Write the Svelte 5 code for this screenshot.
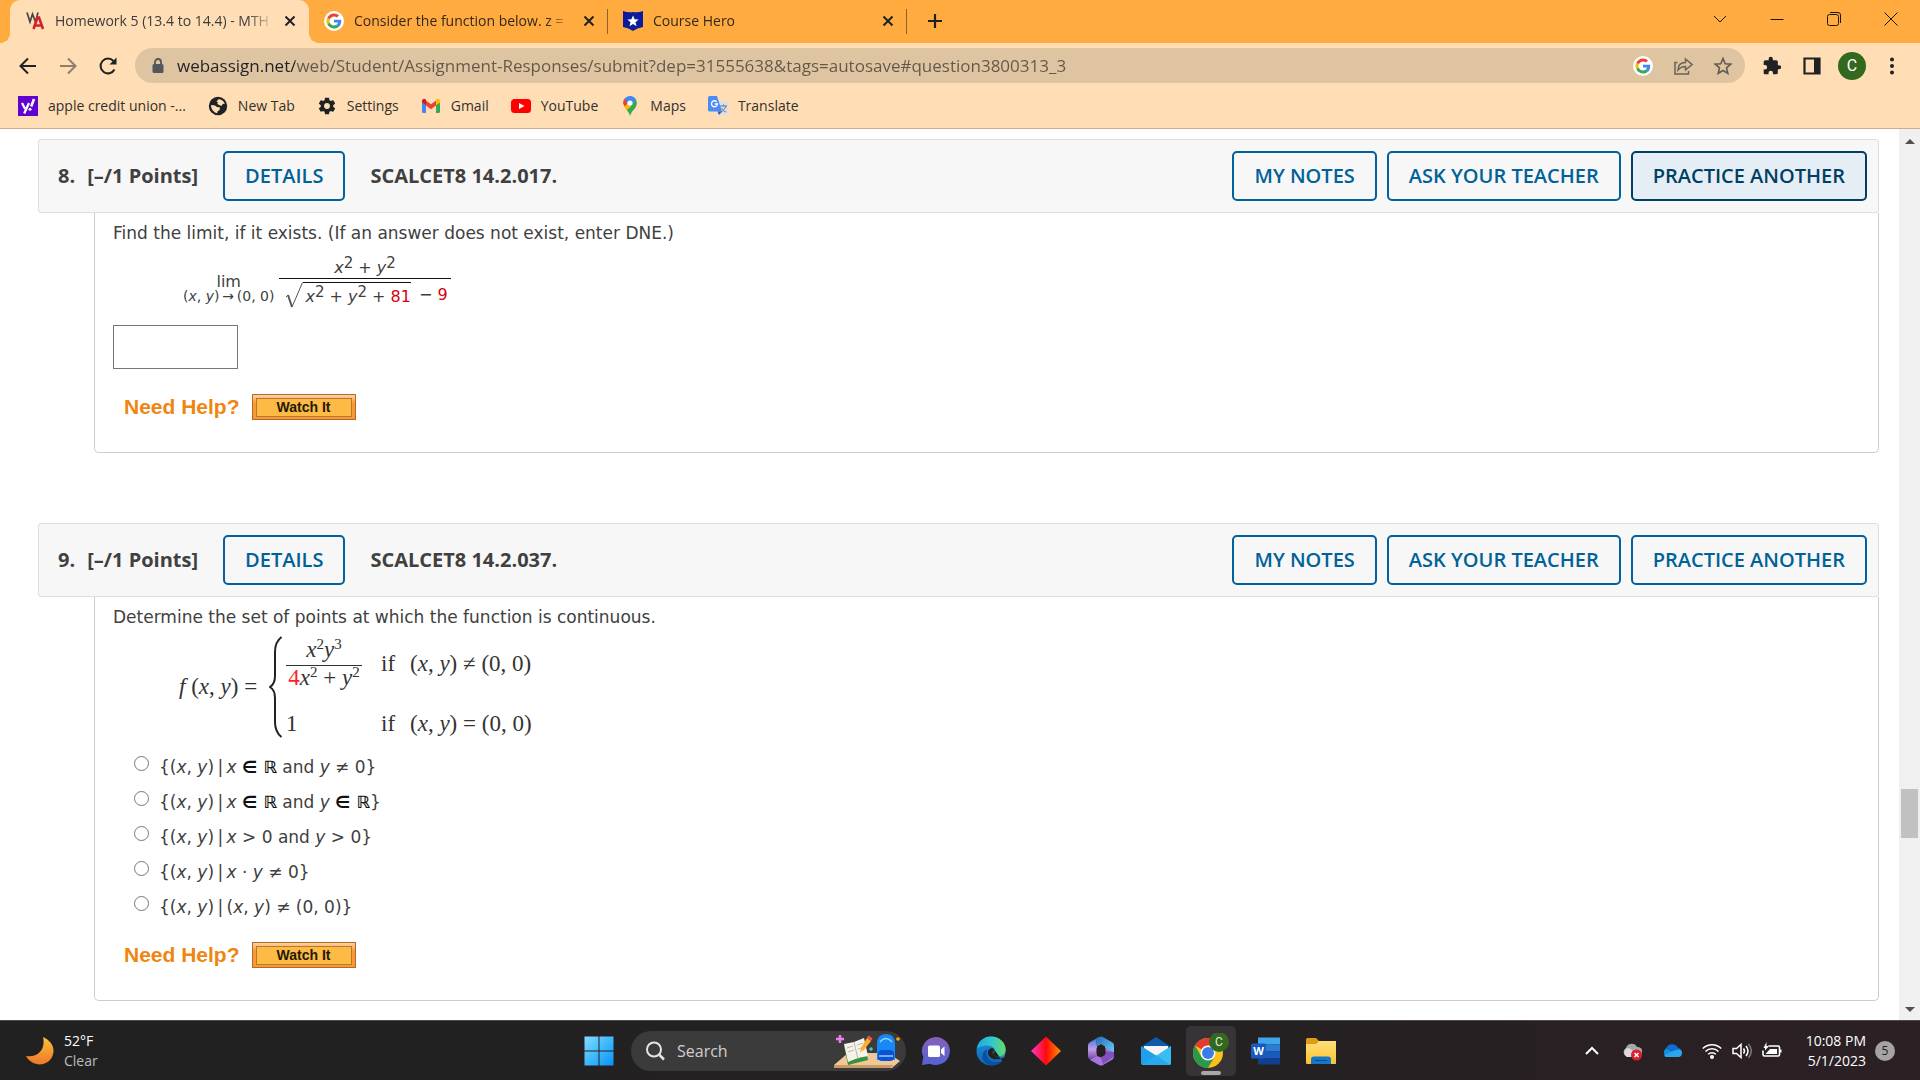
<script>
  const tabs = [
    { title: 'Homework 5 (13.4 to 14.4) - MTH', icon: 'wa', active: true },
    { title: 'Consider the function below. z =', icon: 'google', active: false },
    { title: 'Course Hero', icon: 'hero', active: false }
  ];
  const bookmarks = [
    ['yahoo', 'apple credit union -...'],
    ['globe', 'New Tab'],
    ['gear', 'Settings'],
    ['gmail', 'Gmail'],
    ['youtube', 'YouTube'],
    ['maps', 'Maps'],
    ['translate', 'Translate']
  ];
  const apps = ['chat', 'edge', 'diamond', 'm365', 'mail', 'chrome', 'word', 'folder'];
  const bar = '\u2009|\u2009';
  const arrow = '\u2009→\u2009';
  let url = $state('webassign.net/web/Student/Assignment-Responses/submit?dep=31555638&tags=autosave#question3800313_3');
  let answer = $state('');
  let choice = $state('');
</script>

{#snippet icon(name)}
  {#if name === 'wa'}
    <svg class="i20" viewBox="0 0 20 20" fill="none"><path d="M2 1.500 5 11 7.500 3l3 8L13 1.500" stroke="#444" stroke-width="1.700" /><path d="m8.500 18 4-11.500h1.500L18 18M10 14.500h7" stroke="#d5202b" stroke-width="2.600" /></svg>
  {:else if name === 'google'}
    <svg class="i20" viewBox="0 0 20 20"><circle cx="10" cy="10" r="10" fill="#fff" /><g transform="translate(2.500 2.500) scale(.3125)"><path fill="#EA4335" d="M24 9.500c3.540 0 6.710 1.220 9.210 3.600l6.850-6.850C35.900 2.380 30.470 0 24 0 14.620 0 6.510 5.380 2.560 13.220l7.980 6.190C12.430 13.720 17.740 9.500 24 9.500z" /><path fill="#4285F4" d="M46.980 24.550c0-1.570-.15-3.090-.38-4.550H24v9.020h12.940c-.58 2.960-2.260 5.480-4.780 7.180l7.730 6c4.510-4.180 7.090-10.360 7.090-17.650z" /><path fill="#FBBC05" d="M10.530 28.590c-.48-1.450-.76-2.990-.76-4.590s.27-3.140.76-4.590l-7.980-6.190C.92 16.460 0 20.120 0 24c0 3.880.92 7.540 2.560 10.780l7.970-6.190z" /><path fill="#34A853" d="M24 48c6.480 0 11.930-2.130 15.890-5.810l-7.730-6c-2.150 1.450-4.920 2.300-8.160 2.300-6.260 0-11.570-4.220-13.470-9.910l-7.980 6.190C6.510 42.620 14.620 48 24 48z" /></g></svg>
  {:else if name === 'hero'}
    <svg class="i20" viewBox="0 0 20 20"><path d="M0 0q5 2 10 1 5 1 10-1v16q-6 1-10 4-4-3-10-4z" fill="#0a1c9c" /><path d="m10 4.500 1.600 3.800 4 .3-3.100 2.600 1 4L10 13l-3.500 2.200 1-4-3.100-2.600 4-.3z" fill="#fff" /></svg>
  {:else if name === 'yahoo'}
    <svg class="i20" viewBox="0 0 20 20"><path fill="#5f01d1" d="M0 0h20v20H0z" /><path d="m4 7 3.200 6M11 7l-4.800 10.500" stroke="#fff" stroke-width="2.300" fill="none" /><path d="m16 3-2.800 7.500" stroke="#fff" stroke-width="2.600" /><circle cx="12" cy="13.200" r="1.500" fill="#fff" /></svg>
  {:else if name === 'globe'}
    <svg class="i20" viewBox="0 0 20 20"><circle cx="10" cy="10" r="9.200" fill="#202124" /><path d="M10.500 3.200c2.800 0 5.500 1.800 6.300 4.800l-2-.3-1 2-2.300-.4-2.300-1.500.8-1.600-1.500-.8zM3 9l4 .6 2 1.400 3 .5-.4 2.500-2 1.200-.5 2C5.500 16.500 3 13 3 9z" fill="#ffdeb6" /></svg>
  {:else if name === 'gear'}
    <svg class="i20" viewBox="0 0 24 24"><path fill="#202124" d="M19.430 12.980c.04-.32.07-.64.07-.98s-.03-.66-.07-.98l2.110-1.650c.19-.15.24-.42.12-.64l-2-3.460c-.12-.22-.39-.3-.61-.22l-2.490 1c-.52-.4-1.080-.73-1.690-.98l-.38-2.650A.488.488 0 0 0 14 2h-4c-.25 0-.46.18-.49.42l-.38 2.650c-.61.25-1.170.59-1.690.98l-2.490-1c-.23-.09-.49 0-.61.22l-2 3.460c-.13.22-.07.49.12.64l2.110 1.650c-.04.32-.07.65-.07.98s.03.66.07.98l-2.110 1.650c-.19.15-.24.42-.12.64l2 3.460c.12.22.39.3.61.22l2.490-1c.52.4 1.080.73 1.690.98l.38 2.650c.03.24.24.42.49.42h4c.25 0 .46-.18.49-.42l.38-2.650c.61-.25 1.170-.59 1.690-.98l2.490 1c.23.09.49 0 .61-.22l2-3.460c.12-.22.07-.49-.12-.64zM12 15.500a3.500 3.500 0 1 1 0-7 3.500 3.500 0 0 1 0 7z" /></svg>
  {:else if name === 'gmail'}
    <svg class="i20" viewBox="0 0 20 20"><path fill="#4285f4" d="M1 6v9.500q0 1.500 1.500 1.500H5V9z" /><path fill="#34a853" d="M19 6v9.500q0 1.500-1.500 1.500H15V9z" /><path fill="#ea4335" d="M5 4.500v5l5 3.800 5-3.800v-5l-5 3.800z" /><path fill="#c5221f" d="M1 5c0-2 2-3 3.500-1.800L5 3.600v5.700L1 6.400z" /><path fill="#fbbc04" d="M19 5c0-2-2-3-3.500-1.800l-.5.400v5.700l4-2.900z" /></svg>
  {:else if name === 'youtube'}
    <svg class="i20" viewBox="0 0 20 20"><rect y="3" width="20" height="14" rx="3.500" fill="#f00" /><path d="m8 7 5.500 3L8 13z" fill="#fff" /></svg>
  {:else if name === 'maps'}
    <svg class="i20" viewBox="0 0 20 20"><path fill="#34a853" d="M10 20c-1-3.500-2-4.500-4-7L16 3.500C18 8 16 11.500 13.500 14c-1.700 2-2.500 3-3.500 6z" /><path fill="#fbbc04" d="M6 13C4.700 11.300 3.500 9.500 3.200 7.500l4.500 1.300 3.500 1.200z" /><path fill="#ea4335" d="M3.200 7.500C3 5.500 3.600 4 4.700 2.600L9 6 5 11z" /><path fill="#4285f4" d="M4.700 2.600C6.500.5 9.500-.5 12.500.5c1.700.7 2.700 1.600 3.500 3L10 10 7 6.500z" /><path fill="#fbbc04" d="m4.500 11 3.500-4 3 3.500L6.800 14z" /><circle cx="10" cy="7" r="2.600" fill="#fff" /></svg>
  {:else if name === 'translate'}
    <svg class="i20" viewBox="0 0 20 20"><path fill="#dcdfe3" d="M8 5h10.500q1.500 0 1.500 1.500v11q0 1.500-1.500 1.500H11z" /><path d="M12 10h7M15.500 8.500V10M18 10c-1 3-3 5-5 6M13.500 12c1 2 2.500 3.500 4.500 4" stroke="#607988" fill="none" /><path fill="#4c8bf5" d="M1.500 0H9l5 15.500H1.500Q0 15.500 0 14V1.500Q0 0 1.500 0z" /><path fill="#3057c9" d="M9.500 15.500H14L11 19z" /><path d="M8.700 5.700a3 3 0 1 0 .8 2.300H6.800" stroke="#fff" stroke-width="1.300" fill="none" /></svg>
  {:else if name === 'chat'}
    <svg class="i30" viewBox="0 0 30 30"><defs><linearGradient id="ch" x2="0" y2="1"><stop stop-color="#8560b8" /><stop offset="1" stop-color="#5562d6" /></linearGradient></defs><path d="M15 1a14 14 0 1 1-6 26.700L1 29l1.300-8A14 14 0 0 1 15 1z" fill="url(#ch)" /><rect x="7" y="9.500" width="12" height="11.500" rx="1.500" fill="#fff" /><path d="m20 13.500 3.500-3v9.500L20 17z" fill="#fff" /></svg>
  {:else if name === 'edge'}
    <svg class="i30" viewBox="0 0 30 30"><defs><linearGradient id="eg"><stop stop-color="#1fa9dd" /><stop offset=".55" stop-color="#35c8ca" /><stop offset="1" stop-color="#67dc62" /></linearGradient><linearGradient id="eb" x2="0" y2="1"><stop stop-color="#1b96df" /><stop offset="1" stop-color="#0e62b8" /></linearGradient></defs><circle cx="15" cy="15" r="14.500" fill="url(#eb)" /><path d="M.8 13C2 5 8 .4 15 .4c8.500 0 14.700 6 14.700 13.200 0 5-3.700 7-7.500 7-4 0-5.200-1.400-4.200-3 2.300-4.300-1-8.100-6.500-8.100C6.500 9.500 2.500 11.300.8 13z" fill="url(#eg)" /><path d="M11.300 13.200c-3 8 3 14.800 12.200 12.600 1.500-.4 2.500-1 3.600-1.600C22 31 10.500 31.500 6.700 22.500c-1.200-4 .8-8 4.600-9.300z" fill="#0c4fa0" /><path d="M17.500 12.500c-2.300-1-5.200.3-5.600 3.300-.3 3.200 2 6.700 6.600 7.400 3.500.5 6.200-.2 8.500-1.500l3-2v3l-3 3z" fill="#242022" /><path d="M18 12.800c1.300 1.500 1 3.200 0 4.800-1 1.600.2 3 4.200 3 3 0 5.500-1 6.800-3.500v3.500L27 22l-7-1-4-4z" fill="#4fd28c" opacity=".25" /></svg>
  {:else if name === 'diamond'}
    <svg class="i30" viewBox="0 0 30 30"><defs><linearGradient id="dg"><stop stop-color="#ff38d0" /><stop offset=".5" stop-color="#ff0909" /><stop offset="1" stop-color="#ff9400" /></linearGradient></defs><path d="m15 .5 15 14.500-15 14.500L0 15z" fill="url(#dg)" /></svg>
  {:else if name === 'm365'}
    <svg class="i30" viewBox="0 0 30 30"><defs><linearGradient id="ma" x2="0" y2="1"><stop stop-color="#2d78cf" /><stop offset=".5" stop-color="#c49aea" /><stop offset="1" stop-color="#5a3a94" /></linearGradient><linearGradient id="mb" y2="1"><stop stop-color="#2565b7" /><stop offset="1" stop-color="#70d8fb" /></linearGradient></defs><path d="m13 1-9.500 5.500Q2 7.500 2 9.500v11q0 2 2 3l4 2 3-4V10l9-4.500z" fill="url(#ma)" /><path d="m13 1 3-.5 10.500 6Q28 7.500 28 9.500v10l-9-2v-7l-5-3-4 2.500V5q0-3 3-4z" fill="url(#mb)" /><path d="M28 16v4.500q0 2-1.500 3L17 29q-2 1-4 0l-9-5 7-4 4 1.500 4-2.500v-7z" fill="#a875df" /><path d="M28 16v4.500L17 28l-2-6.500L19 19v-4z" fill="#6a3eaa" opacity=".65" /><path d="m15 9.500 4.500 2.700v5.600L15 20.500l-4.500-2.700v-5.600z" fill="#242022" /></svg>
  {:else if name === 'mail'}
    <svg class="i30" viewBox="0 0 30 30"><path d="M0 11 15 1l15 10v4H0z" fill="#0b5ba8" /><path d="M3 10h24v10H3z" fill="#f4f4f4" /><path d="m0 10 30 19H2q-2 0-2-2z" fill="#1fa0e8" /><path d="M30 10v17q0 2-2 2H1z" fill="#38bdf5" /><path d="m15 19 14 10H1z" fill="#28a9ed" /></svg>
  {:else if name === 'chrome'}
    <svg class="i36" viewBox="0 0 36 36"><circle cx="15" cy="20" r="15" fill="#fbc116" /><path d="M15 20 2 12.500A15 15 0 0 1 28 12.500H15z" fill="#e33b2e" /><path d="M2 12.500A15 15 0 0 0 15 35l6.500-11.300L8.500 23.700z" fill="#2a9a4a" /><circle cx="15" cy="20" r="7.500" fill="#fff" /><circle cx="15" cy="20" r="6" fill="#3b7de8" /><circle cx="26" cy="9" r="10" fill="#33691e" /><text x="26" y="13" text-anchor="middle" font-size="12" font-family="Roboto" fill="#e0e8da">C</text></svg>
  {:else if name === 'word'}
    <svg class="i30" viewBox="0 0 30 30"><path fill="#41a5ee" d="M7 1.500h22v7H7z" /><path fill="#2b7cd3" d="M7 8.500h22v7H7z" /><path fill="#185abd" d="M7 15.500h22v7H7z" /><path fill="#103f91" d="M7 22.500h22v6H7z" /><rect y="7.500" width="15" height="15" rx="1.500" fill="#185abd" /><text x="7.500" y="19" text-anchor="middle" font-size="11" font-weight="700" font-family="Open Sans" fill="#fff">W</text></svg>
  {:else if name === 'folder'}
    <svg class="i30" viewBox="0 0 30 30"><defs><linearGradient id="fo" x2="0" y2="1"><stop stop-color="#ffe07a" /><stop offset="1" stop-color="#fcc22c" /></linearGradient></defs><path d="M0 3.500Q0 2 1.500 2H10l3 3h15v6H0z" fill="#dd9c12" /><path d="M0 8h10l3-3h17v22.500q0 .5-1.500.5h-27Q0 28 0 27z" fill="url(#fo)" /><path d="M5 28v-4.500q0-3 3-3h14q3 0 3 3V28z" fill="#1478c9" /><path d="M9 24.500h12" stroke="#0c4a86" /></svg>
  {/if}
{/snippet}

{#snippet cross()}
  <svg class="i12" viewBox="0 0 12 12"><path d="m1.500 1.500 9 9m0-9-9 9" stroke="#202124" stroke-width="2" /></svg>
{/snippet}

{#snippet head(n, code, pressed)}
  <header class="qhead">
    <h2><span>{n}.</span><span>[–/1 Points]</span></h2>
    <button class="wa">DETAILS</button>
    <h2 class="code">{code}</h2>
    <div class="actions">
      <button class="wa">MY NOTES</button>
      <button class="wa">ASK YOUR TEACHER</button>
      <button class="wa" class:pressed>PRACTICE ANOTHER</button>
    </div>
  </header>
{/snippet}

{#snippet help()}
  <div class="help"><strong>Need Help?</strong><button class="watch"><span>Watch It</span></button></div>
{/snippet}

{#snippet pair()}(<i>x</i>, <i>y</i>){/snippet}
{#snippet inR()}<b class="sym">∈ ℝ</b>{/snippet}

{#snippet option(id, body)}
  <label class="opt"><input type="radio" name="q9" value={id} bind:group={choice} /><span>{@render body()}</span></label>
{/snippet}
{#snippet o1()}&#123;{@render pair()}{bar}<i>x</i> {@render inR()} and <i>y</i> ≠ 0&#125;{/snippet}
{#snippet o2()}&#123;{@render pair()}{bar}<i>x</i> {@render inR()} and <i>y</i> {@render inR()}&#125;{/snippet}
{#snippet o3()}&#123;{@render pair()}{bar}<i>x</i> &gt; 0 and <i>y</i> &gt; 0&#125;{/snippet}
{#snippet o4()}&#123;{@render pair()}{bar}<i>x</i> · <i>y</i> ≠ 0&#125;{/snippet}
{#snippet o5()}&#123;{@render pair()}{bar}{@render pair()} ≠ (0, 0)&#125;{/snippet}

<div class="screen">
  <div class="strip">
    {#each tabs as t}
      <div class="tab" class:active={t.active}>
        {@render icon(t.icon)}
        <button class="title">{t.title}</button>
        <button class="close" aria-label="Close tab">{@render cross()}</button>
      </div>
    {/each}
    <button class="plus" aria-label="New tab"><svg class="i16" viewBox="0 0 16 16"><path d="M8 1v14M1 8h14" stroke="#202124" stroke-width="2.200" /></svg></button>
    <div class="win">
      <button aria-label="Search tabs"><svg class="i14" viewBox="0 0 14 14"><path d="m1 4 6 6 6-6" /></svg></button>
      <button aria-label="Minimize"><svg class="i14" viewBox="0 0 14 14"><path d="M.5 7.500h13" /></svg></button>
      <button aria-label="Restore"><svg class="i14" viewBox="0 0 14 14"><rect x=".5" y="2.500" width="11" height="11" rx="2" /><path d="M3 .5h8q2.500 0 2.500 2.500v8" /></svg></button>
      <button aria-label="Close"><svg class="i14" viewBox="0 0 14 14"><path d="m.5.5 13 13m0-13-13 13" /></svg></button>
    </div>
  </div>

  <div class="toolbar">
    <div class="nav">
      <button aria-label="Back"><svg class="i20" viewBox="0 0 20 20"><path d="M18 10H3m7-7.500L2.500 10l7.500 7.500" /></svg></button>
      <button class="off" aria-label="Forward"><svg class="i20" viewBox="0 0 20 20"><path d="M2 10h15m-7-7.500 7.500 7.500-7.500 7.500" /></svg></button>
      <button aria-label="Reload"><svg class="i20" viewBox="0 0 20 20"><path d="M16.500 13.500A7.400 7.400 0 1 1 15.500 5" /><path d="M18.500 1.500V8.500H11.500z" class="solid" /></svg></button>
    </div>
    <div class="address">
      <svg class="i16" viewBox="0 0 16 16"><rect x="2.500" y="6" width="11" height="9" rx="1.500" fill="#55565a" /><path d="M5 6.500V4a3 3 0 0 1 6 0v2.500" stroke="#55565a" stroke-width="1.800" fill="none" /></svg>
      <input class="url" aria-label="Address" bind:value={url} />
      {@render icon('google')}
      <button aria-label="Share"><svg class="i20" viewBox="0 0 20 20" fill="none" stroke="#6b6257" stroke-width="1.500"><path d="M4.500 6.500H2v11.500h13.500v-3" /><path d="M5 14c0-5 2.500-7.500 7.500-7.500V3l6.500 5.500-6.500 5.500v-3.500c-3.500 0-5.500 1-7.500 3.500z" /></svg></button>
      <button aria-label="Bookmark this tab"><svg class="i20" viewBox="0 0 20 20" fill="none" stroke="#5f5a52" stroke-width="1.600"><path d="m10 2.500 2.200 5.200 5.600.5-4.300 3.700 1.300 5.500-4.800-2.900-4.800 2.900 1.300-5.500-4.300-3.700 5.600-.5z" /></svg></button>
    </div>
    <div class="ext">
      <button aria-label="Extensions"><svg class="i20" viewBox="0 0 24 24"><path fill="#202124" d="M20.500 11H19V7a2 2 0 0 0-2-2h-4V3.500a2.500 2.500 0 0 0-5 0V5H4a2 2 0 0 0-2 2v3.800h1.500a2.700 2.700 0 0 1 0 5.400H2V20c0 1.100.9 2 2 2h3.800v-1.500a2.700 2.700 0 0 1 5.400 0V22H17a2 2 0 0 0 2-2v-4h1.500a2.500 2.500 0 0 0 0-5z" /></svg></button>
      <button aria-label="Side panel"><svg class="i20" viewBox="0 0 20 20"><path d="M2.500 2.500h15v15h-15z" fill="none" stroke="#202124" stroke-width="2.200" /><path fill="#202124" d="M12 2h6v16h-6z" /></svg></button>
      <button class="avatar" aria-label="Profile">C</button>
      <button aria-label="Menu"><svg class="i20" viewBox="0 0 20 20" fill="#202124"><circle cx="10" cy="3.500" r="2" /><circle cx="10" cy="10" r="2" /><circle cx="10" cy="16.500" r="2" /></svg></button>
    </div>
  </div>

  <nav class="bookmarks">
    {#each bookmarks as [name, label]}
      <a href="#{name}">{@render icon(name)}{label}</a>
    {/each}
  </nav>

  <div class="view">
    <main>
      <section>
        {@render head(8, 'SCALCET8 14.2.017.', true)}
        <div class="body">
          <p>Find the limit, if it exists. (If an answer does not exist, enter DNE.)</p>
          <div class="limit">
            <div class="lim"><span>lim</span><small>{@render pair()}{arrow}(0, 0)</small></div>
            <div class="frac">
              <div class="num"><i>x</i><sup>2</sup> + <i>y</i><sup>2</sup></div>
              <div class="den">
                <svg class="root" viewBox="0 0 18 26" fill="none" stroke="#555"><path d="m1 15 2-2" /><path d="m3 13 4 12" stroke-width="2" /><path d="M7 25 17.500.5" /></svg>
                <span class="rad"><i>x</i><sup>2</sup> + <i>y</i><sup>2</sup> + <em>81</em></span>
                <span class="rest">− <em>9</em></span>
              </div>
            </div>
          </div>
          <input class="answer" aria-label="Answer" bind:value={answer} />
          {@render help()}
        </div>
      </section>

      <section>
        {@render head(9, 'SCALCET8 14.2.037.', false)}
        <div class="body">
          <p>Determine the set of points at which the function is continuous.</p>
          <div class="piece">
            <span class="fn"><i>f</i> (<i>x</i>, <i>y</i>) =</span>
            <svg class="brace" viewBox="0 0 14 102" fill="none" stroke="#222" stroke-width="2"><path d="M12.500 1Q6 6 6 16v24q0 8-5 11 5 3 5 11v24q0 10 6.500 15" /></svg>
            <div class="cases">
              <div class="cfrac"><span class="cnum"><i>x</i><sup>2</sup><i>y</i><sup>3</sup></span><span><em>4</em><i>x</i><sup>2</sup> + <i>y</i><sup>2</sup></span></div>
              <span>if</span>
              <span>(<i>x</i>, <i>y</i>) ≠ (0, 0)</span>
              <span>1</span>
              <span>if</span>
              <span>(<i>x</i>, <i>y</i>) = (0, 0)</span>
            </div>
          </div>
          <div class="opts">
            {@render option('a', o1)}
            {@render option('b', o2)}
            {@render option('c', o3)}
            {@render option('d', o4)}
            {@render option('e', o5)}
          </div>
          {@render help()}
        </div>
      </section>
    </main>
    <div class="scroll">
      <svg class="arrow" viewBox="0 0 10 6"><path d="m0 6 5-5 5 5z" fill="#505050" /></svg>
      <div class="thumb"></div>
      <svg class="arrow" viewBox="0 0 10 6"><path d="m0 0 5 5 5-5z" fill="#505050" /></svg>
    </div>
  </div>

  <footer>
    <div class="weather">
      <svg class="i30" viewBox="0 0 30 30"><defs><linearGradient id="mo" x2="0" y2="1"><stop stop-color="#f7c23c" /><stop offset="1" stop-color="#f0762a" /></linearGradient></defs><path d="M18 1c9 4 13 12 9 20-5 10-20 10-26-1 12 2 20-7 17-19z" fill="url(#mo)" /></svg>
      <div><div>52°F</div><div class="dim">Clear</div></div>
    </div>
    <div class="apps">
      <button class="app" aria-label="Start"><svg class="i30" viewBox="0 0 30 30"><defs><linearGradient id="wi" x1="0" y1="0" x2="1" y2="1"><stop stop-color="#85dcff" /><stop offset=".5" stop-color="#40b9fb" /><stop offset="1" stop-color="#0a90fa" /></linearGradient></defs><path fill="url(#wi)" d="M.5.5h14v14H.5zM15.500.5h14v14h-14zM.5 15.500h14v14H.5zM15.500 15.500h14v14h-14z" /></svg></button>
      <label class="search">
        <svg class="i20" viewBox="0 0 20 20" fill="none" stroke="#e4e4e4" stroke-width="2"><circle cx="9" cy="8.500" r="7" /><path d="m14 13.500 5 5" stroke-width="2.500" /></svg>
        <input placeholder="Search" aria-label="Search" />
        <svg class="art" viewBox="0 0 72 36"><path d="m0 32 14-12h40l12 8-8 7H0z" fill="#f0c898" /><path d="M0 32h60l-4 3H0z" fill="#c79a68" /><path d="m10 13 20-6 4 20-20 5z" fill="#37913c" /><path d="m10 11 10-2 10-4 4 18-10 2-10 4z" fill="#f5f2ea" /><path d="m20 9 4 17M13 15l6-2M14 19l6-2m3-5 6-2m-5 6 6-2" stroke="#bdb8ae" /><path d="m27 15 6-10 4 3-7 9-4 2z" fill="#ffac28" /><path d="m33 5 1.500-2.500 4 3L37 8z" fill="#ed5947" /><path d="M6 2v8M2 6h8" stroke="#ec80ed" stroke-width="2.500" /><circle cx="37" cy="16" r="1.800" fill="#48c6d0" /><circle cx="64" cy="6" r="1.800" fill="#ffa916" /><path d="M43 27V11q0-10 9-10t9 10v16z" fill="#1689f6" /><rect x="44" y="17" width="16" height="11" rx="4" fill="#0b52d4" /><path d="M46 9q6-7 12 0M45 23h14" stroke="#8bd0ff" stroke-width="1.500" fill="none" /></svg>
      </label>
      {#each apps as a}
        <button class="app" class:on={a === 'chrome'} aria-label={a}>{@render icon(a)}</button>
      {/each}
    </div>
    <div class="tray">
      <svg class="i20" viewBox="0 0 20 20" fill="none" stroke="#fff" stroke-width="2"><path d="m4 13 6-6 6 6" /></svg>
      <svg class="i20" viewBox="0 0 20 20"><path d="M5 16a5 5 0 0 1-1-9 6 6 0 0 1 11-1 5 5 0 0 1 1 10z" fill="#a9a6a7" /><path d="M5 16a5 5 0 0 1 0-9q4 0 6 4l-2 5z" fill="#dcdadb" /><circle cx="14.500" cy="14" r="5.500" fill="#d8222e" /><path d="m12.500 12 4 4m0-4-4 4" stroke="#fff" stroke-width="1.500" /></svg>
      <svg class="i20" viewBox="0 0 20 20"><path d="M5 16a5 5 0 0 1-1-8.500 6.500 6.500 0 0 1 12-.5 4.600 4.600 0 0 1 0 9z" fill="#0c6fd0" /><path d="M4 7.500 17 15q-1 1-2 1H5a5 5 0 0 1-1-8.500z" fill="#1490df" /><path d="M2 14.500 11 10q9-4 9 2 0 4-4 4H5q-2 0-3-1.500z" fill="#2ba6ec" /></svg>
      <div class="status">
        <svg class="i20" viewBox="0 0 20 20" fill="none" stroke="#fff" stroke-width="1.600"><path d="M.8 7.500a13 13 0 0 1 18.400 0M3.500 10.500a9.200 9.200 0 0 1 13 0M6.200 13.300a5.400 5.400 0 0 1 7.600 0" /><circle cx="10" cy="16" r="1.200" fill="#fff" /></svg>
        <svg class="i20" viewBox="0 0 20 20" fill="none" stroke="#fff" stroke-width="1.500"><path d="M1 7.500h3.500L9 3.500v13l-4.500-4H1zM11.500 7.500q2 2.500 0 5M14 5q4 5 0 10" /><path d="M16.500 3q5.500 7 0 14" stroke="#777" /></svg>
        <svg class="i20" viewBox="0 0 20 20" fill="none" stroke="#fff" stroke-width="1.600"><path d="M6.500 5H16q1.500 0 1.500 1.500v7Q17.500 15 16 15H2.500Q1 15 1 13.500V9.500" /><path d="M3.500 13 8 8h7v5zM18 8.500h1.500v3H18zM1.500 7l3-6v4H7L3 9.500V7z" fill="#fff" stroke="none" /></svg>
      </div>
      <div class="clock"><div>10:08 PM</div><div>5/1/2023</div></div>
      <span class="count">5</span>
    </div>
  </footer>
</div>

<style>
  :global(body) { margin: 0; background: #fff; }
  .screen { min-height: 100vh; display: flex; flex-direction: column; font-family: 'Open Sans', sans-serif; }
  .screen :global(*) { box-sizing: border-box; }
  button, input { font: inherit; color: inherit; border: 0; background: none; padding: 0; margin: 0; }
  svg { display: block; flex: none; }
  .i12 { width: 12px; height: 12px; }
  .i14 { width: 14px; height: 14px; }
  .i16 { width: 16px; height: 16px; }
  .i20 { width: 20px; height: 20px; }
  .i30 { width: 30px; height: 30px; }
  .i36 { width: 36px; height: 36px; }

  .strip { display: flex; height: 43px; background: #ffab40; padding-left: 10px; font-size: 14px; color: #33281b; }
  .tab { display: flex; align-items: center; gap: 10px; width: 299px; padding: 0 13px 2px 15px; position: relative; }
  .tab .title { flex: 1; min-width: 0; text-align: left; white-space: nowrap; overflow: hidden; mask-image: linear-gradient(to right, #000 88%, transparent); }
  .tab.active { background: #ffdeb6; border-radius: 10px 10px 0 0; color: #3b3c3d; }
  .tab.active::before, .tab.active::after { content: ''; position: absolute; bottom: 0; width: 10px; height: 10px; }
  .tab.active::before { left: -10px; background: radial-gradient(circle at 0 0, #ffab40 10px, #ffdeb6 10px); }
  .tab.active::after { right: -10px; background: radial-gradient(circle at 100% 0, #ffab40 10px, #ffdeb6 10px); }
  .tab:not(.active)::after { content: ''; position: absolute; right: 0; top: 9px; height: 25px; width: 1px; background: #8a6330; }
  .plus { padding: 0 20px 2px; }
  .win { margin-left: auto; display: flex; padding-right: 1px; }
  .win button { width: 57px; display: grid; place-items: center; padding-bottom: 6px; }
  .win svg { fill: none; stroke: #1b1710; }

  .toolbar { display: flex; align-items: center; height: 45px; background: #ffdeb6; }
  .nav { display: flex; gap: 20px; padding: 0 17px 0 18px; }
  .nav svg { fill: none; stroke: #202124; stroke-width: 2; }
  .nav .off { opacity: .5; }
  .nav .solid { fill: #202124; stroke: none; }
  .address { flex: 1; display: flex; align-items: center; gap: 20px; height: 35px; border-radius: 18px; background: #dfc4a1; padding: 0 12px 0 15px; }
  .address .i16 { margin-right: -9px; }
  .url { flex: 1; min-width: 0; height: 30px; font-size: 17px; outline: 0; color: transparent; background: linear-gradient(to right, #202124 118px, #62574a 118px); background-clip: text; -webkit-background-clip: text; }
  .ext { display: flex; align-items: center; gap: 20px; padding: 0 18px 0 17px; }
  .avatar { width: 28px; height: 28px; margin: 0 -4px; border-radius: 50%; background: #33691e; color: #fff; font: 16px Roboto, sans-serif; }
  .bookmarks { display: flex; align-items: center; gap: 22px; height: 41px; padding: 0 18px 5px; background: #ffdeb6; border-bottom: 1px solid #c9ae8c; font-size: 14px; }
  .bookmarks a { display: flex; align-items: center; gap: 10px; color: #33302c; text-decoration: none; }

  .view { flex: 1; display: flex; background: #fff; }
  main { flex: 1; padding: 10px 20px 10px 38px; }
  section + section { margin-top: 70px; }
  .qhead { display: flex; align-items: center; height: 74px; padding: 0 11px 0 19px; background: #f7f7f7; border: 1px solid #dedede; border-radius: 3px; font-size: 20px; color: #404040; }
  h2 { display: flex; gap: 12px; margin: 0 25px 0 0; padding-bottom: 2px; font-size: 20px; font-weight: 700; white-space: nowrap; }
  .code { margin-left: 25px; }
  .actions { display: flex; gap: 10px; margin-left: auto; }
  .wa { height: 50px; padding: 0 20px 2px; border: 2px solid #006298; border-radius: 5px; font-weight: 600; color: #006298; white-space: nowrap; }
  .wa.pressed { background: #e6eef5; border-color: #003f64; color: #003f64; }
  .body { margin-left: 56px; padding: 10px 18px 32px; border: 1px solid #ccc; border-top: 0; border-radius: 0 0 5px 5px; font: 17px/20px 'DejaVu Sans', Verdana, sans-serif; color: #404040; }
  p { margin: 0; }
  em { font-style: normal; color: #d8000f; }
  sup { font-size: 15px; line-height: 0; vertical-align: 5px; }
  .limit { display: flex; margin: 12px 0 0 70px; gap: 5px; height: 61px; font-size: 16px; }
  .lim { display: flex; flex-direction: column; align-items: center; padding-top: 19px; line-height: 15px; }
  .lim small { font-size: 14px; }
  .frac { display: flex; flex-direction: column; }
  .num { text-align: center; height: 24px; padding-top: 3px; border-bottom: 1px solid #111; }
  .den { display: flex; padding: 3px 0 0 6px; }
  .root { width: 18px; height: 26px; }
  .rad { border-top: 1px solid #111; padding: 4px 0 0 2px; }
  .rest { padding: 3px 3px 0 8px; }
  .answer { display: block; width: 125px; height: 44px; margin-top: 9px; border: 1px solid #767676; padding: 0 8px; background: #fff; }
  .help { display: flex; align-items: center; gap: 12px; margin: 25px 0 0 11px; }
  .help strong { font: 700 21px/24px 'Liberation Sans', Arial, sans-serif; color: #ee8611; }
  .watch { width: 104px; height: 26px; padding: 3px; border: 1px solid #b06c26; background: linear-gradient(#fbd2a4, #f79a35 35%); font: 700 14px/17px 'Liberation Sans', Arial, sans-serif; color: #231a08; }
  .watch span { display: block; border: 1px solid #b8792b; background: #fdba45; }

  .piece { display: flex; align-items: center; margin: 9px 0 0 66px; font: 23px/24px 'Liberation Serif', 'Times New Roman', serif; color: #333; }
  .piece em { color: #f22; }
  .piece sup { font-size: 15px; vertical-align: 8px; }
  .fn { width: 90px; white-space: nowrap; }
  .brace { width: 14px; height: 102px; }
  .cases { display: grid; grid-template-columns: 76px 10px auto; column-gap: 19px; row-gap: 22px; align-items: center; margin-left: 3px; }
  .cfrac { display: flex; flex-direction: column; text-align: center; white-space: nowrap; }
  .cnum { border-bottom: 1px solid #333; padding-bottom: 3px; }
  .opts { margin: 18px 0 0 21px; display: flex; flex-direction: column; gap: 14px; }
  .opt { display: flex; gap: 10px; align-items: flex-start; }
  .opt input { width: 15px; height: 15px; flex: none; }
  .opt span { padding-top: 2px; line-height: 19px; }
  .sym { color: #111; }

  .scroll { width: 21px; background: #f0f0f0; display: flex; flex-direction: column; align-items: center; padding: 9px 0 7px; }
  .arrow { width: 10px; height: 6px; }
  .thumb { width: 17px; height: 49px; background: #c1c1c1; margin: auto 0 169px; }

  footer { display: grid; grid-template-columns: 1fr auto 1fr; align-items: center; height: 60px; border-top: 1px solid #4a4a4a; background: linear-gradient(to right, #212122, #242122 60%, #2c2025); color: #fff; font-size: 14px; line-height: 20px; }
  .weather { display: flex; align-items: center; gap: 9px; padding-left: 25px; }
  .dim { color: #bdbdbd; }
  .apps { display: flex; align-items: center; gap: 5px; }
  .app { width: 50px; height: 50px; border-radius: 5px; display: grid; place-items: center; position: relative; }
  .app.on { background: #383336; }
  .app.on::after { content: ''; position: absolute; bottom: 1px; left: 15px; width: 20px; height: 4px; border-radius: 2px; background: #aaa7a8; }
  .search { display: flex; align-items: center; width: 275px; height: 40px; margin: 0 0 0 2px; border-radius: 20px; padding: 0 0 0 14px; background: #3c3b3c; font-size: 16px; gap: 12px; }
  .search input { flex: 1; min-width: 0; outline: 0; }
  .search input::placeholder { color: #cfcfcf; opacity: 1; }
  .art { width: 72px; height: 36px; }
  .tray { display: flex; align-items: center; justify-content: flex-end; gap: 20px; padding-right: 25px; }
  .status { display: flex; gap: 10px; }
  .clock { text-align: right; width: 64px; white-space: nowrap; }
  .count { width: 20px; height: 20px; margin-left: -11px; border-radius: 50%; background: #a5a3a3; color: #222; text-align: center; font-size: 12px; }
</style>
